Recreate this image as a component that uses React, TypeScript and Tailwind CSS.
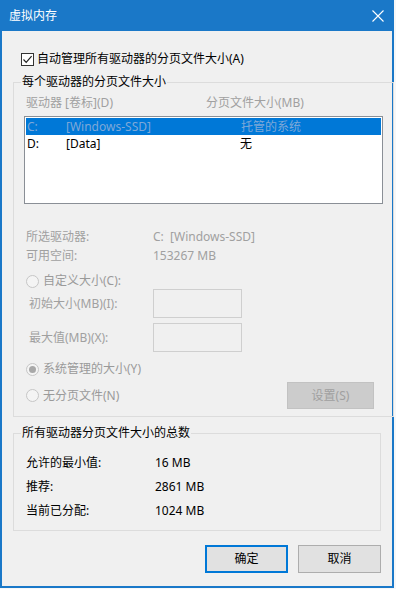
import React from 'react';

const Radio: React.FC<{ checked?: boolean }> = ({ checked }) => (
  <span className="flex-shrink-0 w-[13px] h-[13px] rounded-full border border-[#c6c6c6] bg-[#f4f4f4] flex items-center justify-center">
    {checked && <span className="w-[7px] h-[7px] rounded-full bg-[#a8a8a8]" />}
  </span>
);

const DisabledInput: React.FC = () => (
  <div className="w-[89px] h-[29px] border border-[#cfcfcf] bg-[#f0f0f0]" />
);

const App: React.FC = () => {
  const summary = [
    { label: '允许的最小值:', value: '16 MB' },
    { label: '推荐:', value: '2861 MB' },
    { label: '当前已分配:', value: '1024 MB' },
  ];

  return (
    <div className="w-[396px] h-[589px] bg-[#f7f7f7] font-['Noto_Sans','Noto_Sans_CJK_SC',sans-serif] text-[12px] text-black">
      <div className="w-[394px] h-[588px] flex flex-col bg-[#f0f0f0] border-x-2 border-b-2 border-[#1a78c8]">
        {/* Title bar */}
        <div className="h-[31px] -mx-[2px] bg-[#1a78c8] flex items-center justify-between pl-[9px] pr-[9px] text-white">
          <span className="text-[12px] leading-[16px]">虚拟内存</span>
          <svg width="12" height="12" viewBox="0 0 12 12" className="mr-[1px]">
            <path d="M0.5 0.5 L11.5 11.5 M11.5 0.5 L0.5 11.5" stroke="white" strokeWidth="1.1" fill="none" />
          </svg>
        </div>

        <div className="px-[11px] flex flex-col">
          {/* Auto manage checkbox */}
          <div className="mt-[20px] h-[16px] flex items-center gap-[3px] pl-[8px]">
            <span className="w-[13px] h-[13px] border border-[#333] bg-white flex items-center justify-center">
              <svg width="11" height="11" viewBox="0 0 11 11">
                <path d="M1.5 5.5 L4.2 8.3 L9.6 2.2" stroke="#222" strokeWidth="1.2" fill="none" />
              </svg>
            </span>
            <span className="leading-[16px]">自动管理所有驱动器的分页文件大小(A)</span>
          </div>

          {/* Paging file per drive */}
          <fieldset className="mt-[7px] border border-[#dcdcdc] px-[10px] pb-[7px]">
            <legend className="-ml-[3px] px-px leading-[16px]">每个驱动器的分页文件大小</legend>
            <div className="mt-[5px] h-[16px] flex leading-[16px] text-[#a0a0a0] pl-[2px]">
              <span className="w-[180px]">驱动器 [卷标](D)</span>
              <span>分页文件大小(MB)</span>
            </div>
            <div className="mt-[5px] w-[359px] h-[88px] border border-[#8a8f96] bg-white p-px">
              <div className="h-[17px] flex items-center bg-[#0078d7] text-[#7fa8d8] leading-[17px] pl-px">
                <span className="w-[39px]">C:</span>
                <span className="w-[175px]">[Windows-SSD]</span>
                <span>托管的系统</span>
              </div>
              <div className="h-[17px] flex items-center leading-[17px] pl-px">
                <span className="w-[39px]">D:</span>
                <span className="w-[174px]">[Data]</span>
                <span>无</span>
              </div>
            </div>

            <div className="mt-[23px] text-[#a0a0a0] pl-[2px]">
              <div className="h-[19px] flex items-center">
                <span className="w-[127px]">所选驱动器:</span>
                <span>C:&nbsp;&nbsp;[Windows-SSD]</span>
              </div>
              <div className="h-[19px] flex items-center">
                <span className="w-[127px]">可用空间:</span>
                <span>153267 MB</span>
              </div>
            </div>

            <div className="mt-[8px] h-[16px] flex items-center gap-[4px] pl-[2px] text-[#9a9a9a]">
              <Radio />
              <span className="leading-[16px]">自定义大小(C):</span>
            </div>
            <div className="h-[29px] flex items-center text-[#a0a0a0] pl-[5px]">
              <span className="w-[124px]">初始大小(MB)(I):</span>
              <DisabledInput />
            </div>
            <div className="mt-[5px] h-[29px] flex items-center text-[#a0a0a0] pl-[5px]">
              <span className="w-[124px]">最大值(MB)(X):</span>
              <DisabledInput />
            </div>

            <div className="mt-[9px] h-[16px] flex items-center gap-[4px] pl-[2px] text-[#9a9a9a]">
              <Radio checked />
              <span className="leading-[16px]">系统管理的大小(Y)</span>
            </div>
            <div className="mt-[5px] h-[27px] flex items-center">
              <div className="w-[263px] flex items-center gap-[4px] pl-[2px] text-[#9a9a9a]">
                <Radio />
                <span className="leading-[16px]">无分页文件(N)</span>
              </div>
              <button className="w-[87px] h-[27px] bg-[#cccccc] border border-[#c2c2c2] text-[#a0a0a0] text-[12px]">
                设置(S)
              </button>
            </div>
          </fieldset>

          {/* Totals */}
          <fieldset className="mt-[8px] border border-[#dcdcdc] px-[10px] pb-[7px]">
            <legend className="-ml-[3px] px-px leading-[16px]">所有驱动器分页文件大小的总数</legend>
            <div className="mt-[10px] pl-[2px]">
              {summary.map(row => (
                <div key={row.label} className="h-[24px] flex items-center">
                  <span className="w-[129px]">{row.label}</span>
                  <span>{row.value}</span>
                </div>
              ))}
            </div>
          </fieldset>

          {/* Dialog buttons */}
          <div className="mt-[14px] flex gap-[10px] pl-[192px]">
            <button className="w-[86px] h-[28px] bg-[#e1e1e1] border-2 border-[#0078d7] text-[12px]">确定</button>
            <button className="w-[86px] h-[28px] bg-[#e1e1e1] border border-[#adadad] text-[12px]">取消</button>
          </div>
        </div>
      </div>
    </div>
  );
};

export default App;
